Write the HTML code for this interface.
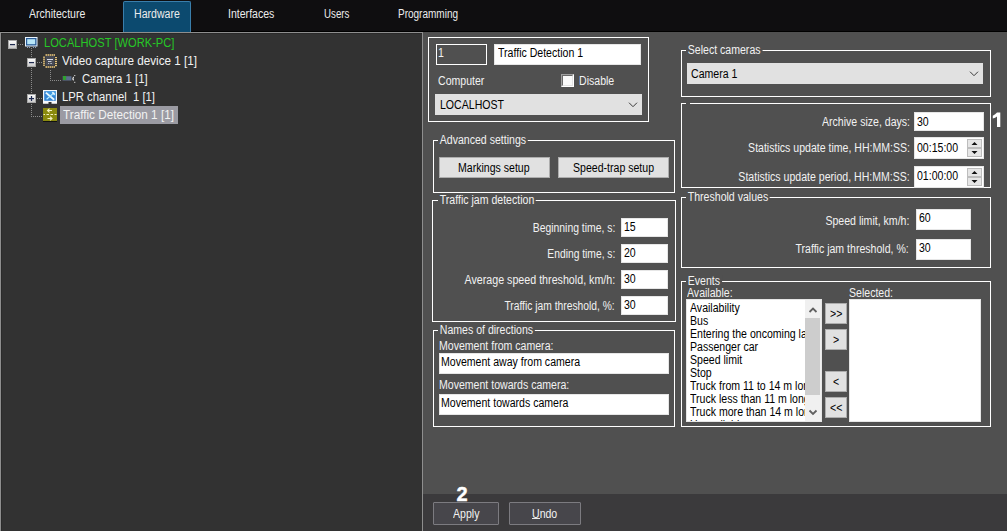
<!DOCTYPE html>
<html><head><meta charset="utf-8">
<style>
*{margin:0;padding:0;box-sizing:border-box}
html,body{width:1007px;height:531px;overflow:hidden;background:#505050;font-family:"Liberation Sans",sans-serif}
.a{position:absolute}
.tx{position:absolute;white-space:pre;font-size:12px;line-height:12px;color:#f2f2f2;transform:scaleX(.88);transform-origin:0 0}
.tr{position:absolute;white-space:pre;font-size:12px;line-height:12px;color:#f2f2f2;transform:scaleX(.88);transform-origin:100% 0;text-align:right}
.bk{color:#000}
.gb{position:absolute;border:1px solid #fff}
.gt{position:absolute;white-space:pre;font-size:12px;line-height:12px;color:#f2f2f2;transform:scaleX(.88);transform-origin:0 0;background:#505050;padding:0 2px 0 2px}
.in{position:absolute;background:#fff;border:1px solid #e6e6e6}
.btn{position:absolute;background:#e1e1e1;border:1px solid #adadad}
.tree{position:absolute;white-space:pre;font-size:12.3px;line-height:12px;color:#f2f2f2;transform-origin:0 0}
</style></head><body>
<!-- tab bar -->
<div class="a" style="left:0;top:0;width:1007px;height:32px;background:#0f0e10"></div>
<div class="a" style="left:0;top:31px;width:1007px;height:1px;background:#000"></div>
<div class="a" style="left:123px;top:1px;width:68px;height:31px;background:#0c4a6f;border:1px solid #3a7eab;border-bottom:none;border-radius:2px 2px 0 0"></div>
<div class="tx" style="left:29px;top:8px;color:#ececec">Architecture</div>
<div class="tx" style="left:134px;top:8px;color:#ececec">Hardware</div>
<div class="tx" style="left:228px;top:8px;color:#ececec">Interfaces</div>
<div class="tx" style="left:323.5px;top:8px;color:#ececec;transform:scaleX(.81)">Users</div>
<div class="tx" style="left:398px;top:8px;color:#ececec;transform:scaleX(.833)">Programming</div>

<!-- tree panel -->
<div class="a" style="left:0;top:32px;width:423px;height:499px;background:#323232;border:1px solid #8e8e8e;border-bottom:none"><div style="position:absolute;left:0;top:0;right:0;bottom:0;border-left:1px solid #2a2a2a;border-top:1px solid #2a2a2a"></div></div>


<!-- tree content -->
<svg class="a" style="left:0;top:33px" width="422" height="100" viewBox="0 33 422 100">
<defs>
<linearGradient id="bx" x1="0" y1="0" x2="0" y2="1"><stop offset="0" stop-color="#ffffff"/><stop offset="1" stop-color="#c8c8c8"/></linearGradient>
</defs>
<g fill="#8c8c8c">
<!-- main vertical dotted line x=31 from 47 to 116 -->
<path d="M31 48h1v1h-1zM31 50h1v1h-1zM31 52h1v1h-1zM31 54h1v1h-1zM31 56h1v1h-1z"/>
<path d="M31 68h1v1h-1zM31 70h1v1h-1zM31 72h1v1h-1zM31 74h1v1h-1zM31 76h1v1h-1zM31 78h1v1h-1zM31 80h1v1h-1zM31 82h1v1h-1zM31 84h1v1h-1zM31 86h1v1h-1zM31 88h1v1h-1zM31 90h1v1h-1zM31 92h1v1h-1z"/>
<path d="M31 104h1v1h-1zM31 106h1v1h-1zM31 108h1v1h-1zM31 110h1v1h-1zM31 112h1v1h-1zM31 114h1v1h-1zM31 116h1v1h-1z"/>
<path d="M33 116h1v1h-1zM35 116h1v1h-1zM37 116h1v1h-1zM39 116h1v1h-1zM41 116h1v1h-1z"/>
<path d="M37 98h1v1h-1zM39 98h1v1h-1zM41 98h1v1h-1z"/>
<path d="M37 62h1v1h-1zM39 62h1v1h-1zM41 62h1v1h-1z"/>
<path d="M18 44h1v1h-1zM20 44h1v1h-1zM22 44h1v1h-1z"/>
<!-- camera branch x=50 -->
<path d="M50 70h1v1h-1zM50 72h1v1h-1zM50 74h1v1h-1zM50 76h1v1h-1zM50 78h1v1h-1zM50 80h1v1h-1zM52 80h1v1h-1zM54 80h1v1h-1zM56 80h1v1h-1zM58 80h1v1h-1zM60 80h1v1h-1z"/>
</g>
<!-- expand boxes -->
<rect x="8.5" y="40.5" width="8" height="8" fill="url(#bx)" stroke="#a8a8a8"/>
<rect x="10" y="44" width="5" height="1.2" fill="#1e2a50"/>
<rect x="27.5" y="58.5" width="8" height="8" fill="url(#bx)" stroke="#a8a8a8"/>
<rect x="29" y="62" width="5" height="1.2" fill="#1e2a50"/>
<rect x="27.5" y="94.5" width="8" height="8" fill="url(#bx)" stroke="#a8a8a8"/>
<rect x="29" y="98" width="5" height="1.2" fill="#1e2a50"/>
<rect x="30.9" y="96" width="1.2" height="5" fill="#1e2a50"/>
<!-- monitor icon -->
<rect x="25" y="37" width="12.5" height="9.5" fill="#e8f4ff"/>
<rect x="26" y="38" width="10.5" height="7.5" fill="#2a5c98"/>
<rect x="27.2" y="39.2" width="8" height="5" fill="#b8e6f8"/>
<path d="M27 47h1v1h-1zM29 47h1v1h-1zM33 47h1v1h-1zM35 47h1v1h-1z" fill="#8aa0c0"/>
<!-- chip icon -->
<g fill="#e6c47a">
<rect x="45.6" y="54" width="1.2" height="2"/><rect x="47.6" y="54" width="1.2" height="2"/><rect x="49.6" y="54" width="1.2" height="2"/><rect x="51.6" y="54" width="1.2" height="2"/><rect x="53.6" y="54" width="1.2" height="2"/>
<rect x="45.6" y="66" width="1.2" height="2"/><rect x="47.6" y="66" width="1.2" height="2"/><rect x="49.6" y="66" width="1.2" height="2"/><rect x="51.6" y="66" width="1.2" height="2"/><rect x="53.6" y="66" width="1.2" height="2"/>
<rect x="43" y="56.6" width="2" height="1.2"/><rect x="43" y="58.6" width="2" height="1.2"/><rect x="43" y="60.6" width="2" height="1.2"/><rect x="43" y="62.6" width="2" height="1.2"/><rect x="43" y="64.6" width="2" height="1.2"/>
<rect x="55" y="57" width="2" height="1.2"/><rect x="55" y="59" width="2" height="1.2"/><rect x="55" y="61" width="2" height="1.2"/><rect x="55" y="63" width="2" height="1.2"/><rect x="55" y="65" width="2" height="1.2"/>
</g>
<rect x="45.5" y="56" width="9" height="9.6" fill="#474a55"/>
<rect x="47" y="59" width="6" height="1" fill="#d8dce8"/><rect x="48" y="61" width="3.5" height="1" fill="#c8ccd8"/><rect x="48" y="63" width="1.2" height="1" fill="#b8bcc8"/><rect x="50.3" y="63" width="1.6" height="1" fill="#b8bcc8"/>
<!-- camera icon -->
<rect x="62.5" y="76" width="9" height="5" fill="#4a5262"/>
<rect x="63" y="76" width="3.2" height="4" fill="#2fa030"/>
<rect x="66.2" y="76.5" width="5" height="3.5" fill="#5c6e8c"/>
<path d="M73.6 76.8q-1.4 1.8 0 3.6" stroke="#f0f0f0" stroke-width="1.1" fill="none"/>
<rect x="74.2" y="75" width="1.1" height="1.1" fill="#d8d8d8"/><rect x="74.2" y="81.8" width="1.1" height="1.1" fill="#d8d8d8"/>
<!-- LPR icon -->
<rect x="43" y="90" width="14" height="12" fill="#f6f8fa"/>
<rect x="44.2" y="91.2" width="11.6" height="9.6" fill="#3384d4"/>
<rect x="47" y="91.2" width="8.8" height="5" fill="#44a0e6" opacity=".7"/>
<path d="M45.8 92.6l8.4 7.2" stroke="#e8f8ff" stroke-width="1.9"/>
<path d="M54.2 92.6l-7.6 6.6" stroke="#b8ecff" stroke-width="1.2"/>
<path d="M52.3 92.2l2.4 2.4" stroke="#e8f8ff" stroke-width="1.6"/>
<path d="M43 102h5.5v1.8h-5.5zM51.5 102h5.5v1.8h-5.5z" fill="#f6f8fa"/>
<!-- traffic icon -->
<rect x="43" y="108" width="14" height="13" fill="#8a8a0e"/>
<rect x="43" y="121" width="14" height="1" fill="#111"/>
<path d="M52 110.5h-4.5M49.5 108.7l-2 1.8 2 1.8M47.5 118.5h4.5M50 116.7l2 1.8-2 1.8" stroke="#f4f0c0" stroke-width="1.1" fill="none"/>
<path d="M43.5 114.5h1.5M46.5 114.5h2.5M50.5 114.5h2.5M54.5 114.5h2" stroke="#f4f0c0" stroke-width="1"/>
</svg>
<div class="a" style="left:60px;top:106px;width:118px;height:18px;background:#9b9ba3"></div>
<div class="tree" style="left:43.5px;top:37px;color:#26c826;transform:scaleX(.906)">LOCALHOST [WORK-PC]</div>
<div class="tree" style="left:62px;top:55px;transform:scaleX(.951)">Video capture device 1 [1]</div>
<div class="tree" style="left:81.5px;top:73px;transform:scaleX(.924)">Camera 1 [1]</div>
<div class="tree" style="left:62px;top:91px;transform:scaleX(.919)">LPR channel  1 [1]</div>
<div class="tree" style="left:63px;top:108.5px;transform:scaleX(.955)">Traffic Detection 1 [1]</div>

<!-- right panel -->
<div class="a" style="left:423px;top:32px;width:584px;height:462px;background:#505050"></div>
<div class="a" style="left:423px;top:494px;width:584px;height:37px;background:#3b3a3c"></div>

<!-- group 1 -->
<div class="gb" style="left:428px;top:37px;width:221px;height:85px"></div>
<div class="a" style="left:436px;top:44px;width:51px;height:21px;border:1px solid #fff"></div>
<div class="tx" style="left:438px;top:47px">1</div>
<div class="in" style="left:494px;top:44px;width:147px;height:21px"></div>
<div class="tx bk" style="left:498px;top:47px">Traffic Detection 1</div>
<div class="tx" style="left:438px;top:75px">Computer</div>
<div class="a" style="left:561px;top:74px;width:13px;height:13px;border-style:solid;border-width:1px;border-color:#a0a0a0 #fff #fff #a0a0a0"><div style="width:11px;height:11px;background:#fafafa;border-style:solid;border-width:1px;border-color:#6a6a6a #e3e3e3 #e3e3e3 #6a6a6a"></div></div>
<div class="tx" style="left:579px;top:75px">Disable</div>
<div class="a" style="left:435px;top:94px;width:207px;height:21px;background:#e1e1e1"></div>
<div class="tx bk" style="left:440px;top:99px">LOCALHOST</div>
<svg class="a" style="left:628px;top:101px" width="10" height="7" viewBox="0 0 10 7"><path d="M1 1.7l4 4 4-4" stroke="#3a3a3a" stroke-width="1" fill="none"/></svg>

<!-- advanced settings -->
<div class="gb" style="left:433px;top:140px;width:242px;height:53px"></div>
<div class="gt" style="left:438px;top:134px">Advanced settings</div>
<div class="btn" style="left:439px;top:157px;width:111px;height:21px"></div>
<div class="tx bk" style="left:458px;top:162px">Markings setup</div>
<div class="btn" style="left:558px;top:157px;width:111px;height:21px"></div>
<div class="tx bk" style="left:573px;top:162px">Speed-trap setup</div>

<!-- traffic jam detection -->
<div class="gb" style="left:432px;top:200px;width:244px;height:122px"></div>
<div class="gt" style="left:438px;top:194px">Traffic jam detection</div>
<div class="tr" style="right:392px;top:222px;transform:scaleX(.867)">Beginning time, s:</div>
<div class="in" style="left:621px;top:218px;width:47px;height:19px"></div>
<div class="tx bk" style="left:624px;top:221px">15</div>
<div class="tr" style="right:392px;top:248px;transform:scaleX(.857)">Ending time, s:</div>
<div class="in" style="left:621px;top:244px;width:47px;height:19px"></div>
<div class="tx bk" style="left:624px;top:247px">20</div>
<div class="tr" style="right:392px;top:274px;transform:scaleX(.891)">Average speed threshold, km/h:</div>
<div class="in" style="left:621px;top:270px;width:47px;height:19px"></div>
<div class="tx bk" style="left:624px;top:273px">30</div>
<div class="tr" style="right:392px;top:300px;transform:scaleX(.857)">Traffic jam threshold, %:</div>
<div class="in" style="left:621px;top:296px;width:47px;height:19px"></div>
<div class="tx bk" style="left:624px;top:299px">30</div>

<!-- names of directions -->
<div class="gb" style="left:433px;top:330px;width:242px;height:97px"></div>
<div class="gt" style="left:438px;top:324px">Names of directions</div>
<div class="tx" style="left:439px;top:340px">Movement from camera:</div>
<div class="in" style="left:439px;top:353px;width:230px;height:21px"></div>
<div class="tx bk" style="left:441px;top:356px">Movement away from camera</div>
<div class="tx" style="left:439px;top:379px">Movement towards camera:</div>
<div class="in" style="left:439px;top:394px;width:230px;height:21px"></div>
<div class="tx bk" style="left:441px;top:397px">Movement towards camera</div>

<!-- select cameras -->
<div class="gb" style="left:681px;top:50px;width:310px;height:47px"></div>
<div class="gt" style="left:686px;top:44px">Select cameras</div>
<div class="a" style="left:687px;top:63px;width:296px;height:21px;background:#e1e1e1"></div>
<div class="tx bk" style="left:691px;top:68px">Camera 1</div>
<svg class="a" style="left:969px;top:70px" width="10" height="7" viewBox="0 0 10 7"><path d="M1 1.7l4 4 4-4" stroke="#3a3a3a" stroke-width="1" fill="none"/></svg>

<!-- archive -->
<div class="gb" style="left:681px;top:103px;width:310px;height:85px"></div>
<div class="a" style="left:686px;top:102px;width:4px;height:3px;background:#505050"></div>
<div class="tr" style="right:97px;top:116px">Archive size, days:</div>
<div class="in" style="left:914px;top:112px;width:70px;height:19px"></div>
<div class="tx bk" style="left:917px;top:116px">30</div>
<div class="tr" style="right:97px;top:142px">Statistics update time, HH:MM:SS:</div>
<div class="in" style="left:914px;top:137px;width:70px;height:22px"></div>
<div class="tx bk" style="left:917px;top:142px">00:15:00</div>
<div class="a" style="left:967px;top:139px;width:15px;height:9px;background:#e6e6e6;border:1px solid #bdbdbd"></div>
<div class="a" style="left:967px;top:148px;width:15px;height:9px;background:#e6e6e6;border:1px solid #bdbdbd"></div>
<svg class="a" style="left:967px;top:139px" width="15" height="18" viewBox="0 0 15 18"><path d="M4.5 6h6l-3-3z M4.5 12h6l-3 3z" fill="#111"/></svg>
<div class="tr" style="right:97px;top:171px">Statistics update period, HH:MM:SS:</div>
<div class="in" style="left:914px;top:166px;width:70px;height:22px"></div>
<div class="tx bk" style="left:917px;top:170px">01:00:00</div>
<div class="a" style="left:967px;top:168px;width:15px;height:9px;background:#e6e6e6;border:1px solid #bdbdbd"></div>
<div class="a" style="left:967px;top:177px;width:15px;height:9px;background:#e6e6e6;border:1px solid #bdbdbd"></div>
<svg class="a" style="left:967px;top:168px" width="15" height="18" viewBox="0 0 15 18"><path d="M4.5 6h6l-3-3z M4.5 12h6l-3 3z" fill="#111"/></svg>
<svg class="a" style="left:990px;top:110px" width="14" height="20" viewBox="990 110 14 20"><path d="M997 112.6h3.3v14.4h-3.3v-10.6q-1.6 1.4-4.2 2.2v-2.9q2.6-1 4.2-3.1z" fill="#fff"/></svg>

<!-- threshold values -->
<div class="gb" style="left:681px;top:197px;width:310px;height:71px"></div>
<div class="gt" style="left:686px;top:191px">Threshold values</div>
<div class="tr" style="right:98px;top:215px">Speed limit, km/h:</div>
<div class="in" style="left:916px;top:209px;width:55px;height:21px"></div>
<div class="tx bk" style="left:919px;top:212px">60</div>
<div class="tr" style="right:98px;top:243px">Traffic jam threshold, %:</div>
<div class="in" style="left:916px;top:239px;width:55px;height:21px"></div>
<div class="tx bk" style="left:919px;top:242px">30</div>

<!-- events -->
<div class="gb" style="left:681px;top:281px;width:310px;height:146px"></div>
<div class="gt" style="left:686px;top:275px">Events</div>
<div class="tx" style="left:687px;top:287px">Available:</div>
<div class="tx" style="left:849px;top:287px">Selected:</div>
<div class="in" style="left:686px;top:299px;width:136px;height:123px"></div>
<div class="in" style="left:849px;top:299px;width:132px;height:123px"></div>
<div class="a" style="left:687px;top:300px;width:119px;height:121px;overflow:hidden"><div class="tx bk" style="left:3px;top:2px">Availability</div><div class="tx bk" style="left:3px;top:15px">Bus</div><div class="tx bk" style="left:3px;top:28px">Entering the oncoming lane</div><div class="tx bk" style="left:3px;top:41px">Passenger car</div><div class="tx bk" style="left:3px;top:54px">Speed limit</div><div class="tx bk" style="left:3px;top:67px">Stop</div><div class="tx bk" style="left:3px;top:80px">Truck from 11 to 14 m long</div><div class="tx bk" style="left:3px;top:93px">Truck less than 11 m long</div><div class="tx bk" style="left:3px;top:106px">Truck more than 14 m long</div><div class="tx bk" style="left:3px;top:119px">Unavailable</div></div>
<div class="a" style="left:805px;top:300px;width:16px;height:121px;background:#f0f0f0"></div>
<div class="a" style="left:805px;top:318px;width:15px;height:77px;background:#cdcdcd"></div>
<svg class="a" style="left:805px;top:300px" width="17" height="121" viewBox="0 0 17 121"><path d="M4.5 12l3.5-3.5 3.5 3.5M4.5 110.5l3.5 3.5 3.5-3.5" stroke="#606060" stroke-width="1.8" fill="none"/></svg>

<div class="btn" style="left:825px;top:303px;width:22px;height:21px"></div>
<div class="btn" style="left:825px;top:329px;width:22px;height:21px"></div>
<div class="btn" style="left:825px;top:371px;width:22px;height:21px"></div>
<div class="btn" style="left:825px;top:397px;width:22px;height:21px"></div>
<div class="tx bk" style="left:830px;top:308px">&gt;&gt;</div>
<div class="tx bk" style="left:833px;top:334px">&gt;</div>
<div class="tx bk" style="left:833px;top:376px">&lt;</div>
<div class="tx bk" style="left:830px;top:402px">&lt;&lt;</div>


<!-- bottom -->
<div class="a" style="left:456.5px;top:483.5px;font:bold 20px/20px 'Liberation Sans',sans-serif;color:#fff;-webkit-text-stroke:0.4px #fff">2</div>
<div class="a" style="left:433px;top:502px;width:66px;height:23px;background:#47464b;border:1px solid #7c7b80;border-radius:1px"></div>
<div class="tx" style="left:453px;top:508px">Apply</div>
<div class="a" style="left:509px;top:502px;width:72px;height:23px;background:#47464b;border:1px solid #7c7b80;border-radius:1px"></div>
<div class="tx" style="left:532px;top:508px">Undo</div>
<div class="a" style="left:532px;top:518px;width:8px;height:1px;background:#e8e8e8"></div>
</body></html>
